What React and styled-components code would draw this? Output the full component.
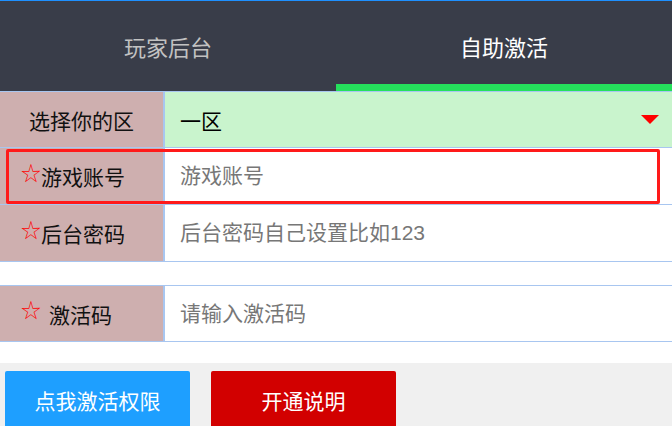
import styled, { createGlobalStyle } from 'styled-components';

const rows = [
    { label: '游戏账号', placeholder: '游戏账号', star: true, marked: true },
    { label: '后台密码', placeholder: '后台密码自己设置比如123', star: true },
];

function App() {
    return (
        <Page>
            <GlobalStyle />
            <TabBar>
                <Tab>玩家后台</Tab>
                <Tab $active>自助激活</Tab>
            </TabBar>
            <Form>
                <Row $h={56}>
                    <Label $pad={29}>选择你的区</Label>
                    <Select>
                        <span>一区</span>
                        <svg width="18" height="9" viewBox="0 0 18 9">
                            <polygon points="0,0 18,0 9,9" fill="#ff0000" />
                        </svg>
                    </Select>
                </Row>
                {rows.map((r) => (
                    <Row key={r.label} $h={57}>
                        <Label $pad={21}>
                            <Star>☆</Star>
                            {r.label}
                        </Label>
                        <Input placeholder={r.placeholder} />
                        {r.marked && <Mark />}
                    </Row>
                ))}
            </Form>
            <CodeRow>
                <Label $pad={21}>
                    <Star $gap={8}>☆</Star>
                    激活码
                </Label>
                <Input placeholder="请输入激活码" />
            </CodeRow>
            <Footer>
                <Button $bg="#1e9fff">点我激活权限</Button>
                <Button $bg="#d20000">开通说明</Button>
            </Footer>
        </Page>
    );
}

export default App;

const GlobalStyle = createGlobalStyle`
    html, body {
        margin: 0;
        padding: 0;
        overflow: hidden;
        background: #fff;
        font-family: "Liberation Sans", "Noto Sans CJK SC", sans-serif;
    }
    * {
        box-sizing: border-box;
    }
`;

const Page = styled.div`
    display: flex;
    flex-direction: column;
    min-height: 100vh;
`;

const TabBar = styled.nav`
    display: grid;
    grid-template-columns: 1fr 1fr;
    height: 91px;
    flex-shrink: 0;
    border-top: 1px solid #1e90ff;
    background: #393d49;
`;

const Tab = styled.div`
    position: relative;
    display: flex;
    align-items: center;
    justify-content: center;
    font-size: 22px;
    color: ${(p) => (p.$active ? '#ffffff' : '#c2c2c2')};
    cursor: pointer;

    &::after {
        content: '';
        display: ${(p) => (p.$active ? 'block' : 'none')};
        position: absolute;
        left: 0;
        right: 0;
        bottom: 0;
        height: 7px;
        background: #25e05c;
    }
`;

const Form = styled.div`
    flex-shrink: 0;
    border-top: 1px solid #a8c6f0;
`;

const Row = styled.div`
    position: relative;
    display: flex;
    flex-shrink: 0;
    height: ${(p) => p.$h}px;
    border-bottom: 1px solid #a8c6f0;
`;

const CodeRow = styled(Row)`
    height: 57px;
    margin-top: 23px;
    border-top: 1px solid #a8c6f0;
`;

const Label = styled.div`
    display: flex;
    align-items: center;
    width: 165px;
    flex-shrink: 0;
    padding-left: ${(p) => p.$pad}px;
    background: #ceafaf;
    border-right: 2px solid #a8c6f0;
    font-size: 21px;
    color: #111;
`;

const Star = styled.span`
    display: inline-block;
    margin-right: ${(p) => p.$gap || 0}px;
    color: #ff0000;
    font-family: "Noto Sans CJK SC", sans-serif;
    font-size: 20px;
    font-weight: 300;
    transform: translateY(-4px);
`;

const Select = styled.div`
    flex: 1;
    display: flex;
    align-items: center;
    justify-content: space-between;
    padding: 0 13px 0 15px;
    background: #c9f4cd;
    font-size: 21px;
    color: #000;
`;

const Input = styled.input`
    flex: 1;
    min-width: 0;
    border: none;
    outline: none;
    padding: 0 15px;
    background: #fff;
    font-family: inherit;
    font-size: 21px;
    color: #333;

    &::placeholder {
        color: #777;
    }
`;

const Mark = styled.div`
    position: absolute;
    left: 6px;
    right: 12px;
    top: 1px;
    bottom: 0;
    border: 3px solid #ff1a1a;
    border-radius: 2px;
    pointer-events: none;
`;

const Footer = styled.div`
    flex: 1 0 auto;
    display: flex;
    gap: 21px;
    margin-top: 21px;
    padding: 8px 5px 0;
    background: #f0f0f0;
`;

const Button = styled.button`
    width: 185px;
    height: 58px;
    border: none;
    border-radius: 2px;
    background: ${(p) => p.$bg};
    color: #fff;
    font-family: inherit;
    font-size: 21px;
    cursor: pointer;
`;
